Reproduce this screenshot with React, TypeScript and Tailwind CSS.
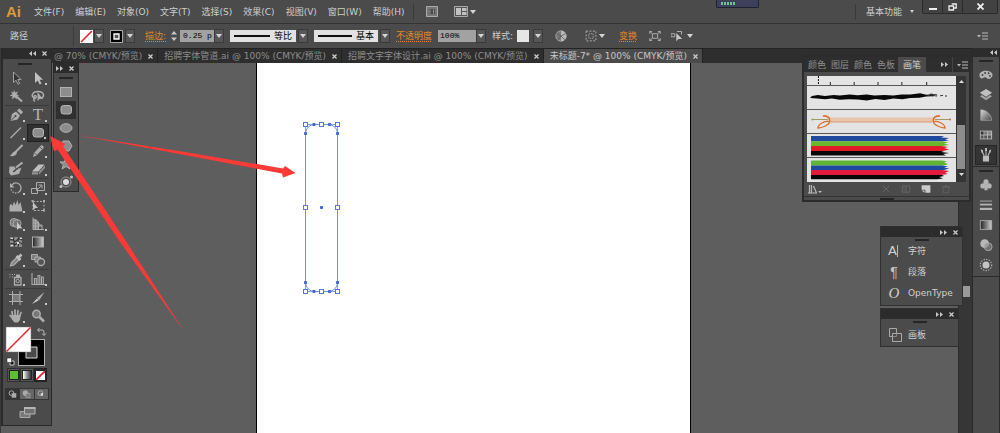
import React, { type ReactNode } from "react";

const MENUS = ["文件(F)", "编辑(E)", "对象(O)", "文字(T)", "选择(S)", "效果(C)", "视图(V)", "窗口(W)", "帮助(H)"];

function Icon({ children, className = "size-4" }: { children: ReactNode; className?: string }) {
  return (
    <svg viewBox="0 0 16 16" className={`shrink-0 ${className}`} fill="none" stroke="none" aria-hidden="true">
      {children}
    </svg>
  );
}

const G = "#adadad";
const D = "#7c7c7c";

function CaretDown() {
  return (
    <svg viewBox="0 0 6 4" className="h-1 w-1.5" aria-hidden="true">
      <path d="M0 0h6L3 4z" fill="#d4d4d4" />
    </svg>
  );
}

function DropButton({ label }: { label: string }) {
  return (
    <button aria-label={label} className="flex h-3.5 w-2.5 items-center justify-center border border-[#3a3a3a] bg-[#565656]">
      <CaretDown />
    </button>
  );
}

function Chevrons({ left = false }: { left?: boolean }) {
  return (
    <svg viewBox="0 0 7 5" className="h-[5px] w-[7px]" aria-hidden="true">
      <path d={left ? "M3 0v5L0 2.5zM7 0v5L4 2.5z" : "M0 0v5l3-2.5zM4 0v5l3-2.5z"} fill="#c8c8c8" />
    </svg>
  );
}

function Cross() {
  return (
    <svg viewBox="0 0 5 5" className="size-[5px]" aria-hidden="true">
      <path d="M.5 .5l4 4M4.500 .5l-4 4" stroke="#d0d0d0" strokeWidth="1.200" />
    </svg>
  );
}

function PanelHeader({ left = false, className = "h-2.5" }: { left?: boolean; className?: string }) {
  return (
    <div className={`flex items-center justify-end gap-1.5 bg-[#2c2c2c] pr-1 ${className}`}>
      <button aria-label="折叠"><Chevrons left={left} /></button>
      <button aria-label="关闭"><Cross /></button>
    </div>
  );
}

function Grip() {
  return <div className="mx-auto h-0.5 w-3.5 bg-[#262626]" />;
}

type Tool = { name: string; art: ReactNode; more?: boolean; on?: boolean };

const roundRect = <rect x="3" y="3.500" width="10.500" height="8.500" rx="2.500" fill="#8d8d8d" stroke="#b5b5b5" />;

const TOOL_GROUPS: Tool[][] = [
  [
    { name: "选择", art: <path d="M5.500 2v10.500l2.500-2.300 2 4 1.700-.8-2-3.900h3.300z" fill="#333" stroke={G} strokeWidth=".9" /> },
    { name: "直接选择", more: true, art: <path d="M5 2v11l2.700-2.500 2 4 1.800-.9-2-3.800H13z" fill="#c0c0c0" /> },
    {
      name: "魔棒",
      art: (
        <>
          <path d="M7.500 7.500L14 13.500" stroke={G} strokeWidth="2" />
          <path d="M6 1.500l1 3 3-1-1.500 2.800 3 1.200-3.300.6.8 3.400L6.500 9.200 4 11.500l.5-3.200L1.500 7.500l3-1.200L3 3.500l2.500 1z" fill={G} />
        </>
      ),
    },
    {
      name: "套索",
      art: (
        <>
          <path d="M5 10.500C0 9 2 3.500 8 3.500s7 5 3.500 6.500M5 10c-1.500-1-1.500-2.500 0-2.500s2 2 0 3-1.500 2 0 3" stroke={G} strokeWidth="1.400" />
          <path d="M7.500 4v9l2-2 3.500 0z" fill={G} />
        </>
      ),
    },
  ],
  [
    {
      name: "钢笔",
      more: true,
      art: (
        <>
          <path d="M2.500 14l1.500-7 4-2.500L12 8.500 9.500 12.500z" fill={G} />
          <path d="M9 3.500L11.500 1.500 15 5 13 7.500z" fill={G} />
          <path d="M3 13.500L7 9.500" stroke="#444" />
          <circle cx="7.500" cy="9" r="1.100" fill="#444" />
        </>
      ),
    },
    { name: "文字工具", more: true, art: null },
    { name: "直线段", more: true, art: <path d="M2.500 13L13 2.500" stroke={G} strokeWidth="1.300" /> },
    { name: "圆角矩形", more: true, on: true, art: roundRect },
    {
      name: "画笔工具",
      art: (
        <>
          <path d="M14.500 2L7.500 9" stroke={G} strokeWidth="2" />
          <path d="M7.500 8L9 10c-1 3-4.500 3.500-7.500 3C4 12 4 9 7.500 8z" fill={G} />
        </>
      ),
    },
    {
      name: "铅笔",
      more: true,
      art: (
        <>
          <path d="M3 14l1-4 7-7.500c1-1 3.500 1.500 2.500 2.500L6.500 12.500z" fill={G} />
          <path d="M4.500 10l2 2M10 4l2 2" stroke="#555" strokeWidth=".9" />
        </>
      ),
    },
    {
      name: "斑点画笔",
      art: (
        <>
          <path d="M1.500 5.500h5l1 2h4l2-1-2.500 6.500-8 1.500-2-3z" fill={G} />
          <path d="M5 10.500c3 0 2-3 5-3" stroke="#444" strokeWidth="1.400" />
          <path d="M8 6.500L14.500 1.500" stroke={G} strokeWidth="2.200" />
        </>
      ),
    },
    {
      name: "橡皮擦",
      more: true,
      art: (
        <>
          <path d="M2 10.500L8.500 3.500h6L8.500 10.500z" fill="#c0c0c0" />
          <path d="M2 11.200v2.300h6v-2.300zM9 11v2.500l6-6.500V4.200z" fill="#929292" />
        </>
      ),
    },
  ],
  [
    {
      name: "旋转",
      more: true,
      art: (
        <>
          <path d="M4 5a5 5 0 0 1 9 3 5 5 0 0 1-2 4" stroke={G} strokeWidth="1.300" />
          <path d="M11 12a5 5 0 0 1-8-4" stroke={G} strokeWidth="1.300" strokeDasharray="1.500 1.200" />
          <path d="M2 3v4.500h4.500z" fill={G} />
        </>
      ),
    },
    {
      name: "比例缩放",
      more: true,
      art: (
        <>
          <path d="M6.500 2.500h8v8h-8zM1.500 8.500h6v5h-6z" stroke={G} />
          <path d="M7 10l4.500-4.500M8.500 5H12v3.500" stroke={G} />
        </>
      ),
    },
    { name: "宽度", more: true, art: <path d="M1.500 13.500V8l1.500-2.500L4.500 8 6 3.500 7.500 7 9.500 2l1 5L12.500 4l2 9.500z" fill={G} /> },
    {
      name: "自由变换",
      art: (
        <>
          <path d="M3 3.500h11v9H3z" stroke={G} strokeDasharray="2 1.500" />
          <path d="M3 4v8l2.500-2H8z" fill="#c0c0c0" />
          <path d="M1.500 2h2v2h-2zM13 2h2v2h-2zM13 11.500h2v2h-2z" fill={G} />
        </>
      ),
    },
    {
      name: "形状生成器",
      more: true,
      art: (
        <>
          <circle cx="6" cy="6.500" r="4" fill="#777" stroke={G} />
          <circle cx="9" cy="7.500" r="4" fill="#777" fillOpacity=".6" stroke={G} />
          <path d="M9 6v8l2-1.700 3.500.2z" fill="#c8c8c8" />
        </>
      ),
    },
    {
      name: "透视网格",
      more: true,
      art: (
        <>
          <path d="M3 3h3l3 3v7.500H3z" fill="#888" />
          <path d="M3 1.500V13.500h11M5.500 4v9.500M8.500 6v7.500M3 4h3l3 3v2h3v4.500M3 7h6M3 10h9" stroke={G} />
        </>
      ),
    },
    {
      name: "网格",
      art: (
        <>
          <path d="M2 3h12v10H2z" fill="#8c8c8c" />
          <path d="M2 6c4-2 4 3 6 1s3-3 6-1M2 10c3-2 4 2 6 0s4-2 6 0M6 3c-2 3 2 6 0 10M11 3c-3 3 1 6-1 10" stroke="#333" strokeWidth="1.100" />
          <path d="M3 4h2v1H3zM9 8h2v2H9zM12 4h2v1h-2zM3 11h2v1H3z" fill="#ddd" />
        </>
      ),
    },
    { name: "渐变", art: <rect x="2.500" y="3" width="11" height="10" fill="url(#toolGrad)" stroke={G} /> },
    {
      name: "吸管",
      more: true,
      art: (
        <>
          <path d="M2.500 14l1-3.500L9 5l2.500 2.500L6 13z" fill="#888" stroke={G} strokeWidth="1.200" />
          <path d="M8.500 4l4 4M10.500 5.500L13.500 2.500" stroke="#c0c0c0" strokeWidth="2.600" />
        </>
      ),
    },
    {
      name: "混合",
      art: (
        <>
          <path d="M1.500 2.500h6v5h-6z" fill={D} stroke={G} />
          <path d="M5 5h5.500v5H5z" fill={D} stroke={G} />
          <circle cx="11" cy="10" r="3.500" fill="#555" stroke={G} strokeWidth="1.300" />
        </>
      ),
    },
  ],
  [
    {
      name: "符号喷枪",
      more: true,
      art: (
        <>
          <path d="M6.500 6.500h6.500v7.500H6.500z" stroke={G} strokeWidth="1.300" />
          <path d="M8 3.500h4V6H8z" fill={G} />
          <circle cx="9.700" cy="10" r="1.700" stroke={G} />
          <path d="M1.500 3.500h1M4 3.500h1M6 3.500h1M1.500 6h1M4 6h1" stroke={G} strokeWidth="1.200" />
        </>
      ),
    },
    { name: "柱形图", more: true, art: <path d="M2 2v11.500h13M4.500 13V7.500h1.800V13M8 13V4.500h1.800V13M11.500 13V6h1.800V13" stroke={G} strokeWidth="1.100" /> },
  ],
  [
    {
      name: "画板工具",
      art: (
        <>
          <path d="M4.500 4.500h7.500v7H4.500z" fill={D} />
          <path d="M4.500 1v14M12 1v14M1 4.500h14M1 11.500h14" stroke={G} />
        </>
      ),
    },
    {
      name: "切片",
      more: true,
      art: (
        <>
          <path d="M14.500 2L7 8l2 2.500z" fill={G} />
          <path d="M7 8.500l1.500 2L2 14z" fill="#d0d0d0" />
        </>
      ),
    },
    {
      name: "抓手",
      more: true,
      art: (
        <>
          <path d="M4.500 8L4 3.500M7 7.500V2M9.500 7.500l.5-5M11.500 8.500l1.500-4M5 11L2 7.500" stroke={G} strokeWidth="1.700" strokeLinecap="round" />
          <path d="M3.500 7h9.200l-.7 5-2 2.500H6.500L4 11.500z" fill={G} />
        </>
      ),
    },
    {
      name: "缩放",
      art: (
        <>
          <circle cx="6.500" cy="6" r="3.700" fill="#777" stroke={G} strokeWidth="1.500" />
          <path d="M9.500 9L14 13.500" stroke={G} strokeWidth="2.600" />
        </>
      ),
    },
  ],
];

function Toolbox() {
  return (
    <section aria-label="工具" className="border-r border-b border-[#2a2a2a] border-l-2 bg-[#4b4b4b]">
      <PanelHeader left className="h-[11px]" />
      <div className="pt-1 pb-1">
        <div className="pr-1"><Grip /></div>
      </div>
      <div className="flex flex-col px-0.5">
        {TOOL_GROUPS.map((group, i) => (
          <div key={i} className={`grid grid-cols-2 ${i ? "border-t border-[#3b3b3b]" : ""}`}>
            {group.map((t) => (
              <button
                key={t.name}
                aria-label={t.name}
                className={`relative flex h-[18px] items-center justify-center ${t.on ? "border border-[#222] bg-[#303030]" : ""}`}
              >
                {t.art ? (
                  <Icon className="size-4">{t.art}</Icon>
                ) : (
                  <span className="font-['Liberation_Serif',serif] text-[17px] leading-4 text-[#b4b4b4]">T</span>
                )}
                {t.more && <span className="absolute right-0.5 bottom-0.5 size-0.5 bg-[#c8c8c8]" />}
              </button>
            ))}
          </div>
        ))}
      </div>
      <svg viewBox="0 0 48 43" className="h-[43px] w-12" aria-label="填色和描边" role="img">
        <path d="M19.500 18.500h18v18h-18z" stroke="#b0b0b0" strokeWidth="9" fill="none" />
        <path d="M19.500 18.500h18v18h-18z" stroke="#000" strokeWidth="7" fill="none" />
        <path d="M23 22h11v11H23z" fill="#4b4b4b" stroke="#d8d8d8" />
        <path d="M3 2h25v25H3z" fill="#fff" stroke="#777" strokeWidth=".5" />
        <path d="M3.500 26.500l24-24" stroke="#e8222e" strokeWidth="1.400" />
        <path d="M35 5h4q2 0 2 2v3M36.500 3l-2 2 2 2M39 8.500l2 2 2-2" stroke="#bbb" fill="none" />
        <path d="M7 36h4v4H7z" fill="#111" stroke="#ccc" />
        <path d="M4 33h4.500v4.500H4z" fill="#fff" stroke="#222" strokeWidth=".5" />
      </svg>
      <div className="mx-0.5 flex justify-between px-0.5">
        <button aria-label="颜色" className="flex size-3.5 items-center justify-center border border-[#303030] bg-[#555]">
          <span className="size-2 border border-[#222] bg-[#5fbf32] box-content" />
        </button>
        <button aria-label="渐变填充" className="flex size-3.5 items-center justify-center border border-[#303030] bg-[#555]">
          <span className="size-2 border border-[#222] bg-linear-to-r from-white to-[#333] box-content" />
        </button>
        <button aria-label="无" className="flex size-3.5 items-center justify-center border border-[#222] bg-[#262626]">
          <svg viewBox="0 0 9 9" className="size-[9px]" aria-hidden="true">
            <path d="M0 0h9v9H0z" fill="#fff" />
            <path d="M0 9L9 0" stroke="#e8222e" strokeWidth="1.800" />
          </svg>
        </button>
      </div>
      <div className="mx-0.5 mt-1.5 flex border border-[#353535]">
        {["正常绘图", "背面绘图", "内部绘图"].map((n, i) => (
          <button key={n} aria-label={n} className={`flex h-2.5 flex-1 items-center justify-center border-r border-[#353535] last:border-r-0 ${i ? "bg-[#666]" : "bg-[#333]"}`}>
            <svg viewBox="0 0 9 8" className="h-2 w-[9px]" aria-hidden="true">
              <circle cx="3.500" cy="3.200" r="2.400" fill={i === 1 ? "#aaa" : "none"} stroke="#aaa" />
              {i < 2 ? <rect x="4" y="3.500" width="4" height="3.800" fill={i ? "#777" : "#aaa"} stroke="#aaa" strokeWidth=".6" /> : <path d="M3.500 3.200h2.500v2.500H4z" fill="#ddd" />}
            </svg>
          </button>
        ))}
      </div>
      <button aria-label="更改屏幕模式" className="mx-auto my-1 flex h-[17px] items-center">
        <svg viewBox="0 0 17 13" className="h-[13px] w-[17px]" aria-hidden="true">
          <path d="M1 5.500h10v6H1z" fill="#777" stroke="#aaa" />
          <path d="M5.500 1.500h10.500v6.500H5.500z" fill="#707070" stroke="#b5b5b5" />
          <path d="M5 1h11.500v2H5z" fill="#b5b5b5" />
        </svg>
      </button>
    </section>
  );
}

const SHAPES: { name: string; art: ReactNode }[] = [
  { name: "矩形", art: <rect x="2.500" y="3.500" width="11" height="9" fill="#8d8d8d" stroke="#b0b0b0" /> },
  { name: "圆角矩形形状", art: roundRect },
  { name: "椭圆", art: <ellipse cx="8" cy="8" rx="6" ry="4.300" fill="#8d8d8d" stroke="#b0b0b0" /> },
  { name: "多边形", art: <path d="M5 3h6l3 5-3 5H5L2 8z" fill="#8d8d8d" stroke="#b0b0b0" /> },
  { name: "星形", art: <path d="M8 2l1.700 4H14l-3.400 2.700L12 13 8 10.500 4 13l1.400-4.300L2 6h4.300z" fill="#8d8d8d" stroke="#b0b0b0" /> },
  {
    name: "光晕",
    art: (
      <>
        <circle cx="8" cy="8" r="3" fill="#ddd" />
        <circle cx="8" cy="8" r="5" stroke="#999" />
        <circle cx="13.500" cy="3" r="1.500" fill="#c0c0c0" />
        <circle cx="3" cy="12.500" r="1.500" fill="#c0c0c0" />
      </>
    ),
  },
];

function ShapePanel() {
  return (
    <section aria-label="形状工具" className="absolute -top-px left-px w-[26px] border border-[#2a2a2a] bg-[#4b4b4b]">
      <PanelHeader />
      <div className="flex flex-col items-center pt-1">
        <Grip />
        <div className="mt-1 flex flex-col">
          {SHAPES.map((s, i) => (
            <button key={s.name} aria-label={s.name} className={`flex h-[18px] w-5 items-center justify-center ${i === 1 ? "bg-[#303030]" : ""}`}>
              <Icon className="size-4">{s.art}</Icon>
            </button>
          ))}
        </div>
      </div>
    </section>
  );
}

function StrokeSelect({ id, label, value, width }: { id: string; label: string; value: string; width: string }) {
  return (
    <div className="flex items-center gap-0.5">
      <div className={`flex h-3 items-center bg-[#e2e2e2] pr-1 pl-1 ${width}`}>
        <span className="h-0.5 flex-1 bg-[#111]" />
        <select id={id} aria-label={label} className="ml-1 w-[18px] appearance-none bg-transparent text-[9px] leading-3 text-black outline-none">
          <option>{value}</option>
        </select>
      </div>
      <DropButton label={`${label}选项`} />
    </div>
  );
}

function ControlBar() {
  return (
    <div className="flex h-[25px] items-center border-t border-[#333] bg-[#4b4b4b] pr-3 pl-2.5">
      <div className="flex w-16 items-center justify-between">
        <span>路径</span>
        <span className="h-5 w-px bg-[#3c3c3c]" />
      </div>
      <div className="ml-1.5 flex items-center gap-1.5">
        <div className="flex items-center gap-px">
          <button aria-label="填色">
            <svg viewBox="0 0 13 13" className="size-[13px]" aria-hidden="true">
              <path d="M0 0h13v13H0z" fill="#fff" />
              <path d="M1 12L12 1" stroke="#e2222c" strokeWidth="1.600" />
            </svg>
          </button>
          <DropButton label="填色选项" />
        </div>
        <div className="flex items-center gap-0.5">
          <button aria-label="描边颜色">
            <svg viewBox="0 0 13 13" className="size-[13px]" aria-hidden="true">
              <path d="M.5 .5h12v12H.5z" fill="#000" stroke="#aaa" />
              <path d="M4 4h5v5H4z" fill="#555" stroke="#fff" strokeWidth="1.300" />
            </svg>
          </button>
          <DropButton label="描边颜色选项" />
        </div>
      </div>
      <div className="ml-2.5 flex items-center">
        <label htmlFor="weight" className="text-[#e2862a] underline decoration-dotted underline-offset-2">描边:</label>
        <svg viewBox="0 0 8 12" className="ml-1 h-3 w-2" aria-hidden="true">
          <path d="M1 4.500L4 1l3 3.500zM1 7.500L4 11l3-3.500z" fill="#c8c8c8" />
        </svg>
        <input id="weight" defaultValue="0.25 p" className="ml-0.5 h-3 w-[34px] bg-[#a2a2a2] pl-[3px] font-['Liberation_Mono',monospace] text-[8px] text-black outline-none" />
        <DropButton label="描边粗细选项" />
      </div>
      <div className="ml-1.5 flex items-center gap-1.5">
        <StrokeSelect id="profile" label="变量宽度配置文件" value="等比" width="w-[66px]" />
        <StrokeSelect id="brush" label="画笔定义" value="基本" width="w-16" />
      </div>
      <div className="ml-1.5 flex items-center">
        <label htmlFor="opacity" className="text-[#e2862a] underline decoration-dotted underline-offset-2">不透明度</label>
        <input id="opacity" defaultValue="100%" className="ml-1.5 h-3 w-[38px] bg-[#a2a2a2] pl-0.5 font-['Liberation_Mono',monospace] text-[8px] text-black outline-none" />
        <DropButton label="不透明度选项" />
      </div>
      <div className="ml-1.5 flex items-center">
        <span>样式:</span>
        <button aria-label="图形样式" className="mx-1 size-3 bg-[#e6e6e6]" />
        <DropButton label="图形样式选项" />
      </div>
      <div className="ml-3 flex items-center gap-3.5">
        <button aria-label="重新着色图稿" className="mr-1">
          <Icon className="size-3">
            <circle cx="8" cy="8" r="7" fill="#777" stroke="#b0b0b0" />
            <path d="M8 8V1a7 7 0 0 1 0 14z" fill="#b8b8b8" />
            <path d="M8 8l6-3M8 8l5 5M8 8L2 5M8 8l-4 5" stroke="#555" />
          </Icon>
        </button>
        <button aria-label="对齐" className="flex items-center gap-0.5">
          <Icon className="size-3">
            <path d="M1.500 1.500h13v13h-13z" stroke="#b0b0b0" strokeWidth="1.300" strokeDasharray="2.500 2" />
            <path d="M5 5h6v6H5z" stroke="#b0b0b0" strokeDasharray="2 1" />
          </Icon>
          <CaretDown />
        </button>
        <button className="text-[#e2862a] underline decoration-dotted underline-offset-2">变换</button>
        <button aria-label="隔离选中的对象" className="-ml-0.5">
          <Icon className="size-3">
            <path d="M4.500 5h7v6h-7zM1 2l3 2.500M15 2l-3 2.500M1 14l3-2.500M15 14l-3-2.500M1 5V2h3M12 2h3v3M1 11v3h3M15 11v3h-3" stroke="#b8b8b8" strokeWidth="1.200" />
          </Icon>
        </button>
        <button aria-label="选择类似的对象" className="-ml-1 flex items-center gap-1">
          <Icon className="size-3">
            <path d="M0 5h5v4H0zM8 2h6v4" stroke="#b0b0b0" strokeWidth="1.300" />
            <path d="M7 4v11l3-3h5z" fill="#c4c4c4" />
          </Icon>
          <CaretDown />
        </button>
      </div>
      <button aria-label="控制面板菜单" className="ml-auto"><Flyout /></button>
    </div>
  );
}

function Flyout() {
  return (
    <svg viewBox="0 0 11 8" className="h-2 w-[11px]" aria-hidden="true">
      <path d="M0 3h4L2 5.500z" fill="#bbb" />
      <path d="M5 1h6M5 4h6M5 7h6" stroke="#bbb" />
    </svg>
  );
}

function TitleBar() {
  return (
    <header className="relative flex h-[23px] items-center bg-[#4b4b4b] pl-1.5">
      <span className="w-7 font-['Liberation_Sans',sans-serif] text-[15px] leading-5 font-bold text-[#dd9a3c]">Ai</span>
      <nav aria-label="主菜单" className="flex items-center gap-[11px]">
        {MENUS.map((m) => (
          <button key={m} className="whitespace-nowrap">{m}</button>
        ))}
      </nav>
      <span className="ml-2 h-4 w-px bg-[#3a3a3a]" />
      <button aria-label="转到 Bridge" className="ml-3">
        <svg viewBox="0 0 12 11" className="h-[11px] w-3" aria-hidden="true">
          <path d="M.5 .5h11v10H.5z" fill="#777" stroke="#aaa" />
          <path d="M3 3h6v5H3z" fill="#4b4b4b" />
          <path d="M4 3.500v4M7.500 3.500v4" stroke="#999" />
        </svg>
      </button>
      <button aria-label="排列文档" className="ml-4 flex items-center gap-0.5">
        <svg viewBox="0 0 14 11" className="h-[11px] w-3.5" aria-hidden="true">
          <path d="M.5 .5h13v10H.5z" fill="#555" stroke="#aaa" />
          <path d="M2 2h5v7H2zM8 2h4.500v3H8zM8 6h4.500v3H8z" fill="#c0c0c0" />
        </svg>
        <CaretDown />
      </button>
      <div aria-hidden="true" className="absolute top-0 right-[241px] flex h-2 w-[43px] items-start rounded-b-xs border border-t-0 border-[#1f2233] bg-[#3d405a] px-1 pt-0.5">
        <span className="h-[3px] w-3.5 bg-[repeating-linear-gradient(90deg,#6fc48c_0_2px,#3d405a_2px_3px)]" />
      </div>
      <span className="ml-auto h-4 w-px bg-[#3a3a3a]" />
      <button className="ml-2.5 flex items-center gap-2">
        <span>基本功能</span>
        <svg viewBox="0 0 4 3" className="h-[3px] w-1" aria-hidden="true"><path d="M0 0h4L2 3z" fill="#ccc" /></svg>
      </button>
      <div className="mr-0.5 ml-2 flex h-3.5 self-start rounded-b-xs border border-t-0 border-[#2b2b2b] bg-[#424242]">
        <button aria-label="最小化" className="flex w-5 items-center justify-center border-r border-[#2b2b2b]"><span className="mt-1 h-0.5 w-2 bg-[#eee]" /></button>
        <button aria-label="还原" className="flex w-5 items-center justify-center border-r border-[#2b2b2b]">
          <svg viewBox="0 0 9 8" className="h-2 w-[9px]" aria-hidden="true"><path d="M3.700 1h4.500v4h-2M1 3h4.500v4H1z" fill="none" stroke="#eee" strokeWidth="1.300" /></svg>
        </button>
        <button aria-label="关闭窗口" className="flex w-[34px] items-center justify-center">
          <svg viewBox="0 0 7 7" className="size-[7px]" aria-hidden="true"><path d="M.5 .5l6 6M6.500 .5l-6 6" stroke="#eee" strokeWidth="1.800" /></svg>
        </button>
      </div>
    </header>
  );
}

const DOCS = [
  { name: "@ 70% (CMYK/预览)", on: false },
  { name: "招聘字体管道.ai @ 100% (CMYK/预览)", on: false },
  { name: "招聘文字字体设计.ai @ 100% (CMYK/预览)", on: false },
  { name: "未标题-7* @ 100% (CMYK/预览)", on: true },
];

function DocumentTabs() {
  return (
    <div className="flex h-[15px] border-t border-[#232323] bg-[#2e2e2e]">
      {DOCS.map((d, i) => (
        <div
          key={d.name}
          className={`flex items-center gap-1.5 border-r border-[#222] pr-1 whitespace-nowrap ${i ? "pl-1.5" : "pl-0.5"} ${d.on ? "bg-[#4b4b4b] text-[#c8c8c8]" : "text-[#8d8d8d]"}`}
        >
          <button>{d.name}</button>
          <button aria-label={`关闭 ${d.name}`}><Cross /></button>
        </div>
      ))}
    </div>
  );
}

function Selection() {
  const boxes = [[2, 2], [18, 2], [34, 2], [2, 85], [34, 85], [2, 169], [18, 169], [34, 169]];
  const dots = [[10.5, 2], [26, 2], [2, 11], [34, 11], [18, 85], [2, 160], [34, 160], [10.5, 169], [26, 169]];
  return (
    <svg viewBox="0 0 37 172" className="absolute top-[59px] left-[46px] h-[172px] w-[37px]" role="img" aria-label="圆角矩形路径">
      <rect x="2.500" y="2.500" width="32" height="167" fill="none" stroke="#86a6e8" />
      <rect x="2.500" y="2.500" width="32" height="167" rx="9" fill="none" stroke="#6a90e0" />
      {boxes.map(([x, y]) => <rect key={`${x},${y}`} x={x - 1.5} y={y - 1.5} width="4" height="4" fill="#fff" stroke="#5579d8" />)}
      {dots.map(([x, y]) => <rect key={`${x},${y}`} x={x - 1} y={y - 1} width="3" height="3" rx=".8" fill="#4368d0" />)}
    </svg>
  );
}

function BrushPanel() {
  return (
    <section aria-label="画笔面板" className="absolute top-[-8px] right-[-13px] w-[169px] border-2 border-[#2c2c2c] bg-[#4b4b4b]">
      <div className="flex h-[15px] items-stretch bg-[#2e2e2e] pl-0.5 text-[#8f8f8f]">
        {["颜色", "图层", "颜色", "色板"].map((n, i) => (
          <button key={i} className="w-[23px] px-0.5 text-left whitespace-nowrap">{n}</button>
        ))}
        <button className="w-7 bg-[#4b4b4b] text-[#d0d0d0]">画笔</button>
        <button aria-label="展开面板" className="ml-auto"><Chevrons /></button>
        <span className="mx-1 w-px bg-[#444]" />
        <button aria-label="画笔菜单" className="mr-px"><Flyout /></button>
      </div>
      <div className="mx-[3px] mt-1 flex">
        <div className="h-[106px] flex-1 bg-[#e4e4e4]">
          <svg viewBox="0 0 150 106" preserveAspectRatio="none" className="h-full w-full" role="img" aria-label="画笔列表">
            <path d="M11.500 0v9" stroke="#111" strokeDasharray="2 1" />
            <path d="M23.500 6v3M47.500 6v3M71.500 6v3M95.500 6v3M120.500 6v3" stroke="#222" />
            <path d="M0 9.500h150M0 33.500h150M0 57.500h150M0 81.500h150" stroke="#555" />
            <path d="M5 20l6-1 7 1 9-1 6 .6 10-1 8 .7 9-.7 8 1 10-.5 9 .5 8-1.200 9 0 10-1.200 6 1.500 7-.7 2 2-9 .5-7 1.200-9 .3-8 1.200-9-.6-9 1.300-9-.8-9 1.500-9-1-9-.3-9 .5-8-1.200-7 .6-8-.8-7-.3z" fill="#080808" />
            <path d="M121 19.500l10 .5M124 18l8 1M134 19.800l3-.5M139 20h2" stroke="#333" strokeDasharray="3 1" />
            <path d="M24 41.500h102l5 2-5 2.500H24l-5-2.500z" fill="#e8c4ad" />
            <path d="M24 46h102" stroke="#d69b74" />
            <path d="M5 43.500h16M129 43.500h15" stroke="#a09a68" />
            <circle cx="5.500" cy="43.500" r="1" fill="#82a455" />
            <circle cx="144" cy="43.500" r="1" fill="#c26d38" />
            <path d="M16 40q7 0 7 5c0 4-8 7-12 7 0-4 8-8 12-6M17 40q4-1 6 3" stroke="#db7031" fill="none" strokeWidth="1.300" />
            <path d="M134 40q-7 0-7 5c0 4 8 7 12 7 0-4-8-8-12-6M133 40q-4-1-6 3" stroke="#db7031" fill="none" strokeWidth="1.300" />
            <path d="M4 60h134l-3 1.500 8 .5-4 1.500 4 1-7 .7H4z" fill="#2049a0" />
            <path d="M4 65.200h132l6 1-4 1.500 5 1-6 1.300H4z" fill="#6ab52d" />
            <path d="M4 70h131l7 1-4 1 5 1.500-6 1.500H4z" fill="#e21926" />
            <path d="M4 75h134l-3 1 8 1-6 1 3 1.500H4z" fill="#080808" />
            <path d="M4 84.500h132l5 1-3 1 4 1.500-4 1.500H4z" fill="#5fb533" />
            <path d="M4 89.500h132l6 1-4 1 5 1-5 1.500H4z" fill="#2049a0" />
            <path d="M4 94h132l7 1-4 2 3 1-7 1H4z" fill="#e21b3c" />
            <path d="M4 99h132l2 1-5 1 4 1.500-6 .7H4z" fill="#080808" />
          </svg>
        </div>
        <div className="flex w-2.5 flex-col items-center bg-[#343434] pt-1 pb-0.5">
          <svg viewBox="0 0 5 3" className="h-[3px] w-[5px]" aria-hidden="true"><path d="M0 3h5L2.500 0z" fill="#ddd" /></svg>
          <span className="mt-[42px] h-11 w-2 bg-[#8c8c8c]" />
          <svg viewBox="0 0 5 3" className="mt-auto mb-1 h-[3px] w-[5px]" aria-hidden="true"><path d="M0 0h5L2.500 3z" fill="#ddd" /></svg>
        </div>
      </div>
      <div className="flex h-3.5 items-center gap-2.5 pr-[18px] pl-1">
        <button aria-label="画笔库" className="mr-auto">
          <svg viewBox="0 0 14 9" className="h-[9px] w-3.5" aria-hidden="true">
            <path d="M1.500 0v8M3.500 0v8M5.500 1l3 7M0 8h9" stroke="#bbb" strokeWidth="1.200" fill="none" />
            <path d="M10 6h4l-2 2z" fill="#bbb" />
          </svg>
        </button>
        <button aria-label="移去画笔描边"><Icon className="size-2.5"><path d="M3 3l10 10M13 3L3 13" stroke="#686868" strokeWidth="1.500" /></Icon></button>
        <button aria-label="所选对象的选项"><Icon className="size-2.5"><path d="M2 3h12v10H2zM8 3v10M4 6h2M4 9h2" stroke="#686868" strokeWidth="1.500" /></Icon></button>
        <button aria-label="新建画笔"><Icon className="size-2.5"><path d="M1 2h14v12H7V9H1z" fill="#ccc" /><path d="M1 10.500h4.500V14z" fill="#ccc" /></Icon></button>
        <button aria-label="删除画笔"><Icon className="size-2.5"><path d="M3 5h10l-1 9H4zM2 4h12M6 2h4" stroke="#606060" strokeWidth="1.500" /></Icon></button>
      </div>
      <div className="flex h-1 items-center border-t border-[#333]"><Grip /></div>
    </section>
  );
}

function TypePanels() {
  return (
    <div className="absolute top-[163px] right-[-5px] flex w-[83px] flex-col items-start gap-0.5">
      <section aria-label="文字面板" className="w-full border border-[#303030] bg-[#4b4b4b]">
        <PanelHeader />
        <div className="pt-0.5"><Grip /></div>
        <ul className="flex flex-col gap-px pb-0.5 pl-[7px] text-[#d0d0d0]">
          <li><button className="flex h-5 items-center gap-2"><span className="flex w-3 items-center text-[13px]">A<span className="h-3 w-px shrink-0 bg-[#bbb]" /></span>字符</button></li>
          <li><button className="flex h-5 items-center gap-2"><span className="w-3 text-center font-['Liberation_Sans',sans-serif] text-[14px] text-[#c4c4c4]">¶</span>段落</button></li>
          <li><button className="flex h-5 items-center gap-2"><span className="w-3 text-center font-['Liberation_Serif',serif] text-[15px] italic">O</span>OpenType</button></li>
        </ul>
      </section>
      <section aria-label="画板面板" className="w-[79px] border border-[#303030] bg-[#4b4b4b]">
        <PanelHeader />
        <div className="pt-0.5"><Grip /></div>
        <button className="flex h-[23px] items-center gap-1.5 pl-[7px] text-[#d0d0d0]">
          <svg viewBox="0 0 14 14" className="size-3.5" aria-hidden="true">
            <path d="M5 8.500H1.500v-8h7V5" fill="none" stroke="#aaa" />
            <path d="M4.500 5.500h9v8h-9z" fill="#4b4b4b" stroke="#aaa" />
            <path d="M8.500 5.500v3h-4" fill="none" stroke="#888" />
          </svg>
          画板
        </button>
      </section>
    </div>
  );
}

const DOCK: { name: string; art: ReactNode; on?: boolean }[][] = [
  [
    { name: "颜色", art: <><path d="M8 3c4.500 0 7.500 2.500 7.500 5s-2.500 4.500-5 4.500c-2 0-1.500-1.800-3.500-1.800C5 10.700 5 12 3.500 12 1.500 12 .5 10 .5 8 .5 5 4 3 8 3z" fill="#b4b4b4" /><circle cx="4" cy="8" r="1.100" fill="#444" /><circle cx="7" cy="5.700" r="1.100" fill="#444" /><circle cx="11" cy="6" r="1.100" fill="#444" /><circle cx="12.500" cy="9" r="1.100" fill="#444" /></> },
    { name: "图层", art: <><path d="M8 1l7 4.500L8 10 1 5.500z" fill="#c0c0c0" /><path d="M1 9.500L3.500 8 8 11l4.500-3L15 9.500 8 14z" fill="#a4a4a4" /></> },
    { name: "颜色参考", art: <path d="M2 2c6 0 12 5 12.500 12H2z" fill="url(#fanGrad)" stroke="#aaa" strokeWidth=".8" /> },
    { name: "色板", art: <><path d="M1 3h14v10H1z" fill="#b4b4b4" /><path d="M2 4h3.200v3.500H2z" fill="#333" /><path d="M6 4h3.200v3.500H6z" fill="#777" /><path d="M10.300 4h3.400v3.500h-3.400z" fill="#888" /><path d="M2 8.600h3.200V12H2zM6 8.600h3.200V12H6zM10.300 8.600h3.400V12h-3.400z" fill="#555" /></> },
    { name: "画笔", on: true, art: <><path d="M4.500 9h7v6.500h-7z" fill="#bdbdbd" /><path d="M6 9L3.500 4M8 9V2M10 9l2.500-5" stroke="#b0b0b0" strokeWidth="1.300" /><path d="M2 1.500l2.500 1L4.500 5l-1.500.5zM7 0h2v3.500H7zM14 1.500L11.500 3v2l1.500.5z" fill="#c4c4c4" /></> },
  ],
  [
    { name: "符号", art: <><circle cx="8" cy="4.500" r="3" fill="#b4b4b4" /><circle cx="4.500" cy="9" r="3" fill="#b4b4b4" /><circle cx="11.500" cy="9" r="3" fill="#b4b4b4" /><path d="M7 7h2l1 7H6z" fill="#b4b4b4" /></> },
    { name: "描边", art: <><path d="M1 3.500h14" stroke="#b4b4b4" /><path d="M1 7.500h14" stroke="#b4b4b4" strokeWidth="2" /><path d="M1 12.500h14" stroke="#b4b4b4" strokeWidth="2.500" /></> },
    { name: "渐变", art: <rect x="1.500" y="3" width="13" height="10" fill="url(#toolGrad)" stroke="#aaa" /> },
    { name: "透明度", art: <><circle cx="6.500" cy="6.500" r="5" fill="#b8b8b8" /><circle cx="10.500" cy="10" r="4.500" fill="#888" fillOpacity=".6" stroke="#aaa" /></> },
    { name: "外观", art: <><circle cx="8" cy="8" r="4" fill="#c4c4c4" /><circle cx="8" cy="8" r="6.500" stroke="#b0b0b0" strokeWidth="1.300" strokeDasharray="1.500 1.500" /></> },
  ],
];

function Dock() {
  return (
    <aside aria-label="面板停放区" className="flex w-7 flex-col border-x border-[#2a2a2a] bg-[#4b4b4b]">
      <div className="flex h-[9px] items-center justify-end bg-[#2c2c2c] pr-0.5"><button aria-label="展开停放区"><Chevrons left /></button></div>
      {DOCK.map((group, i) => (
        <div key={i} className="flex flex-col items-center border-b border-[#2a2a2a] pt-[3px] pb-px">
          <Grip />
          <div className="mt-[3px] flex flex-col">
            {group.map((d) => (
              <button key={d.name} aria-label={d.name} className={`flex h-5 w-[22px] items-center justify-center ${d.on ? "border border-[#262626] bg-[#343434]" : ""}`}>
                <Icon className="size-3.5">{d.art}</Icon>
              </button>
            ))}
          </div>
        </div>
      ))}
    </aside>
  );
}

function Arrows() {
  return (
    <svg viewBox="0 0 260 300" className="pointer-events-none absolute top-0 left-0 z-10 h-[300px] w-[260px] -translate-x-[10px]" aria-hidden="true">
      <path d="M35 72L140 88.500l101 17 2-2.500 10.500 7L241 114.500l-1-4-100-19z" fill="#f93a36" />
      <path d="M8 73L23.500 81 21 83l61.500 93 60.500 93.500L78 179 15.500 86.500 12 88.500z" fill="#f93a36" />
    </svg>
  );
}

export default function App() {
  return (
    <div className="flex min-h-screen flex-col overflow-hidden bg-[#5e5e5e] font-['DejaVu_Sans','Noto_Sans_CJK_SC',sans-serif] text-[9px] leading-3 text-[#cfcfcf]">
      <svg className="absolute size-0" aria-hidden="true">
        <defs>
          <linearGradient id="toolGrad"><stop stopColor="#222" /><stop offset="1" stopColor="#d0d0d0" /></linearGradient>
          <linearGradient id="fanGrad" x2="1" y2="1"><stop stopColor="#ddd" /><stop offset="1" stopColor="#444" /></linearGradient>
        </defs>
      </svg>
      <TitleBar />
      <ControlBar />
      <div className="flex flex-1 border-l border-[#3a3a3a]">
        <aside className="w-[51px] shrink-0"><Toolbox /></aside>
        <div className="flex min-w-0 flex-1 flex-col">
          <DocumentTabs />
          <div className="flex flex-1">
            <main className="relative z-10 flex flex-1">
              <div className="relative ml-[204px] w-[48%] border-x border-black bg-white">
                <Selection />
              </div>
              <ShapePanel />
              <Arrows />
              <BrushPanel />
              <TypePanels />
            </main>
            <div className="w-3.5 border-l border-[#2a2a2a] bg-[#363636] pt-[223px] pl-1">
              <div className="h-[11px] w-[7px] bg-[#999]" />
            </div>
          </div>
        </div>
        <Dock />
      </div>
    </div>
  );
}
